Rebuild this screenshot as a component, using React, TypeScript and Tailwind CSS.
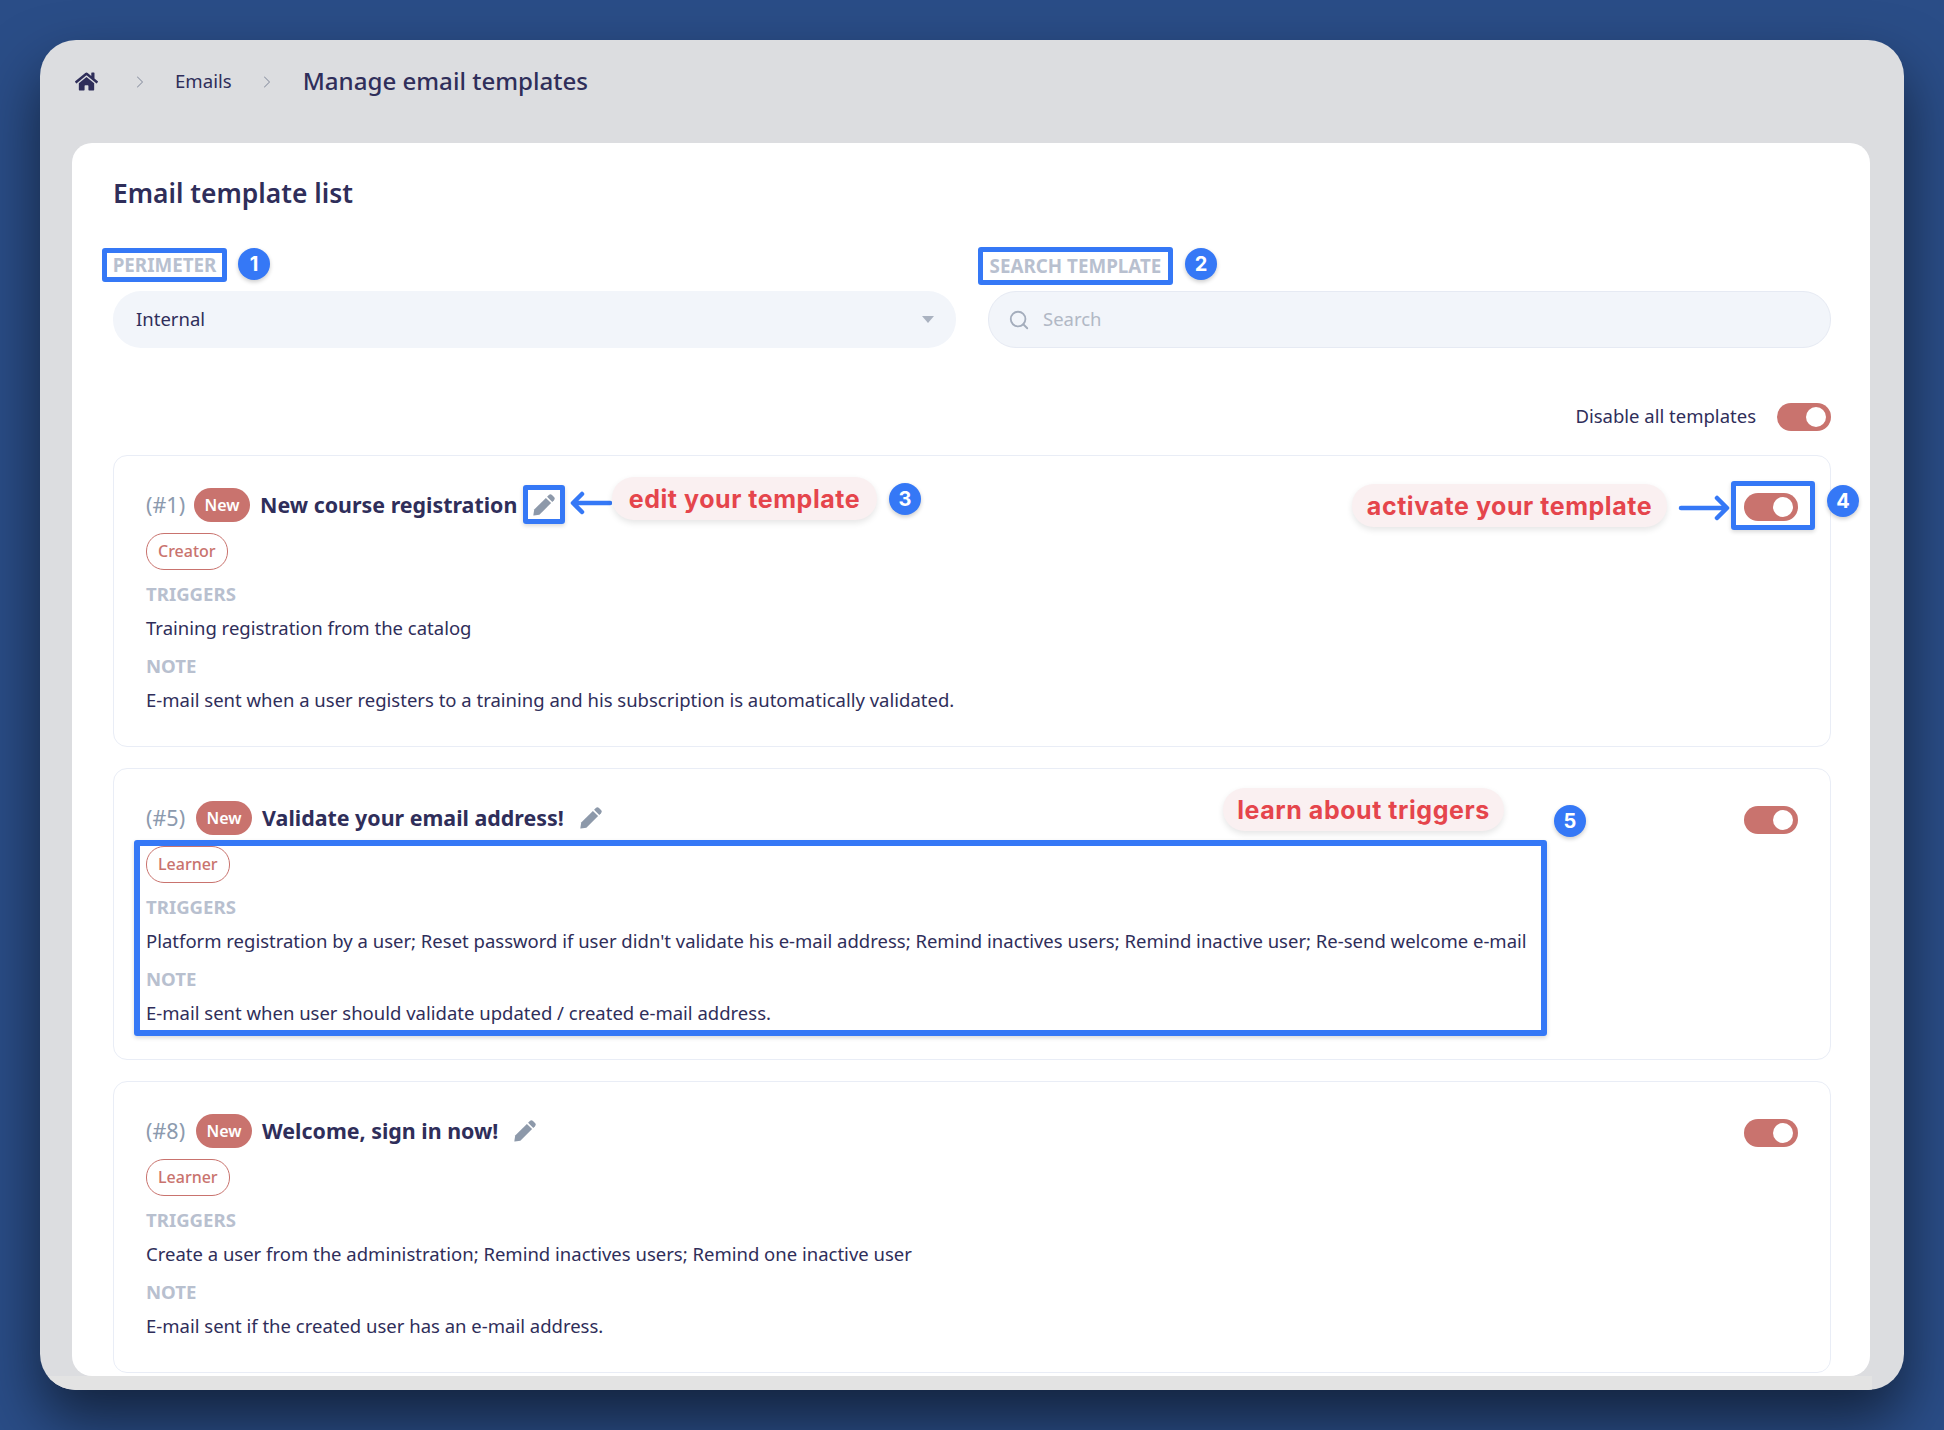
import { FaHome } from "react-icons/fa";
import { ChevronRight, Search } from "lucide-react";

const Pencil = ({ className }: { className: string }) => (
  <svg className={className} width="22" height="22" viewBox="0 0 22 22" fill="#8d99aa">
    <path d="M1.2 15.6 12.9 3.9l5.2 5.2L6.4 20.8 0.8 21.6a.4.4 0 0 1-.45-.45z" />
    <path d="M14.1 2.7 15.8 1a2.3 2.3 0 0 1 3.2 0l2 2a2.3 2.3 0 0 1 0 3.2l-1.7 1.7z" />
  </svg>
);

const Toggle = () => (
  <div className="flex h-[28px] w-[54px] items-center justify-end rounded-full bg-[#c9736e] pr-[5px]">
    <div className="h-[20px] w-[20px] rounded-full bg-white" />
  </div>
);

type CardProps = {
  num: string;
  title: string;
  role: string;
  triggers: string;
  note: string;
  numGap: string;
};

const Card = ({ num, title, role, triggers, note, numGap }: CardProps) => (
  <div className="flex h-[292px] justify-between rounded-[14px] border border-[#e9edf6] px-[32px] pt-[32px]">
    <div className="flex flex-col items-start">
      <div className="flex h-[34px] items-center">
        <span className="whitespace-nowrap text-[21.5px] text-[#8c9aae]">{num}</span>
        <span className={`${numGap} flex h-[34px] w-[56px] items-center justify-center rounded-[17px] bg-[#c9736e] text-[16px] font-semibold text-white`}>
          New
        </span>
        <span className="ml-[10px] whitespace-nowrap text-[21.4px] font-bold text-[#2f2e5a]">{title}</span>
        <Pencil className="ml-[16px]" />
      </div>
      <span className="mt-[11px] flex h-[37px] items-center rounded-[18px] border border-[#c9736e] px-[11px] pb-[2px] text-[16px] font-medium text-[#c9736e]">
        {role}
      </span>
      <div className="mt-[12px] text-[18.6px] leading-[24px] font-bold text-[#b8c0cf]">TRIGGERS</div>
      <div className="mt-[10px] whitespace-nowrap text-[18.5px] leading-[24px] text-[#2f2e5a]">{triggers}</div>
      <div className="mt-[14px] text-[18.6px] leading-[24px] font-bold text-[#b8c0cf]">NOTE</div>
      <div className="mt-[10px] whitespace-nowrap text-[18.5px] leading-[24px] text-[#2f2e5a]">{note}</div>
    </div>
    <div className="pt-[5px]">
      <Toggle />
    </div>
  </div>
);

const Num = ({ n, className }: { n: string; className: string }) => (
  <div
    className={`absolute flex h-[32px] w-[32px] items-center justify-center rounded-full bg-[#3578f6] text-[20px] font-bold text-white shadow-[0_2px_4px_rgba(0,0,0,0.2)] ${className}`}
    style={{ fontFamily: "Inter, sans-serif" }}
  >
    {n}
  </div>
);

const Callout = ({ text, className }: { text: string; className: string }) => (
  <div
    className={`absolute flex h-[43px] items-center justify-center rounded-[22px] bg-[#faf0f1] pt-[3px] text-[25px] font-bold tracking-[0.55px] whitespace-nowrap text-[#e5454c] shadow-[0_3px_6px_rgba(0,0,0,0.1)] ${className}`}
    style={{ fontFamily: "Inter, sans-serif" }}
  >
    {text}
  </div>
);

const Frame = ({ className }: { className: string }) => (
  <div className={`absolute rounded-[3px] border-[5px] border-[#3578f6] shadow-[0_2px_4px_rgba(0,0,0,0.15)] ${className}`} />
);

export default function App() {
  return (
    <div
      className="relative h-[1430px] w-[1944px] overflow-hidden bg-[#2a4d87] p-[40px] text-[#2f2e5a]"
      style={{ fontFamily: "'Noto Sans', sans-serif" }}
    >
      <div className="relative flex h-[1350px] w-[1864px] flex-col overflow-hidden rounded-[36px] bg-[#dcdde0] shadow-[0_30px_60px_rgba(0,0,0,0.55)]">
        <div className="absolute bottom-0 left-0 h-[14px] w-[1832px] bg-[#e3e3e3]" />
        <div className="flex h-[103px] flex-none items-center pb-[21px] pl-[35px]">
          <FaHome className="text-[23px] text-[#2f2e5a]" />
          <ChevronRight className="ml-[32px] mt-[2px] text-[#8f95a5]" size={20} strokeWidth={1.25} />
          <span className="ml-[25px] text-[18.6px]">Emails</span>
          <ChevronRight className="ml-[25px] mt-[2px] text-[#8f95a5]" size={20} strokeWidth={1.25} />
          <span className="ml-[26px] text-[24.1px] font-medium">Manage email templates</span>
        </div>
        <div className="relative ml-[32px] h-[1233px] w-[1798px] flex-none rounded-[20px] bg-white pt-[30px] pr-[39px] pl-[41px]">
          <h1 className="text-[26.4px] leading-[40px] font-semibold">Email template list</h1>
          <div className="mt-[78px] grid h-[57px] grid-cols-2 gap-[32px]">
            <div className="flex items-center justify-between rounded-[28px] bg-[#f2f5fa] pr-[22px] pl-[23px]">
              <span className="-mt-[2px] text-[18.5px]">Internal</span>
              <div className="h-0 w-0 border-x-[6px] border-t-[7px] border-x-transparent border-t-[#aab2c0]" />
            </div>
            <div className="flex items-center rounded-[28px] border border-[#e6eaf3] bg-[#f2f5fa] pl-[19px]">
              <Search className="text-[#a4adbc]" size={22} strokeWidth={2} />
              <span className="-mt-[2px] ml-[13px] text-[18.5px] text-[#b1b8c5]">Search</span>
            </div>
          </div>
          <div className="mt-[55px] flex h-[28px] items-center justify-end">
            <span className="-mt-[3px] text-[18.5px]">Disable all templates</span>
            <div className="ml-[21px]">
              <Toggle />
            </div>
          </div>
          <div className="mt-[24px] flex flex-col gap-[21px]">
            <Card
              num="(#1)"
              title="New course registration"
              role="Creator"
              triggers="Training registration from the catalog"
              note="E-mail sent when a user registers to a training and his subscription is automatically validated."
              numGap="ml-[9px]"
            />
            <Card
              num="(#5)"
              title="Validate your email address!"
              role="Learner"
              triggers="Platform registration by a user; Reset password if user didn't validate his e-mail address; Remind inactives users; Remind inactive user; Re-send welcome e-mail"
              note="E-mail sent when user should validate updated / created e-mail address."
              numGap="ml-[11px]"
            />
            <Card
              num="(#8)"
              title="Welcome, sign in now!"
              role="Learner"
              triggers="Create a user from the administration; Remind inactives users; Remind one inactive user"
              note="E-mail sent if the created user has an e-mail address."
              numGap="ml-[11px]"
            />
          </div>
        </div>
      </div>

      {/* annotations laid over the screenshot */}
      <div className="absolute top-[248px] left-[102px] flex h-[34px] w-[125px] items-center justify-center rounded-[3px] border-[5px] border-[#3578f6] bg-white pt-[1px] text-[18.8px] font-bold text-[#b8c0cf]">
        PERIMETER
      </div>
      <Num n="1" className="top-[248px] left-[238px]" />
      <div className="absolute top-[247px] left-[978px] flex h-[38px] w-[195px] items-center justify-center rounded-[3px] border-[5px] border-[#3578f6] bg-white text-[18.8px] font-bold whitespace-nowrap text-[#b8c0cf]">
        SEARCH TEMPLATE
      </div>
      <Num n="2" className="top-[248px] left-[1185px]" />

      <Frame className="top-[485px] left-[523px] h-[39px] w-[42px]" />
      <svg className="absolute top-[490px] left-[570px]" width="42" height="28" viewBox="0 0 42 28" fill="none" stroke="#3578f6" strokeWidth="4.5" strokeLinecap="round" strokeLinejoin="round">
        <path d="M40 13H4M12 4l-9 9 9 9" />
      </svg>
      <Callout text="edit your template" className="top-[477px] left-[612px] w-[265px]" />
      <Num n="3" className="top-[483px] left-[889px]" />

      <Callout text="activate your template" className="top-[484px] left-[1352px] w-[315px]" />
      <svg className="absolute top-[494px] left-[1678px]" width="52" height="28" viewBox="0 0 52 28" fill="none" stroke="#3578f6" strokeWidth="4.5" strokeLinecap="round" strokeLinejoin="round">
        <path d="M3 14h45M39 4l10 10-10 10" />
      </svg>
      <Frame className="top-[481px] left-[1731px] h-[49px] w-[84px]" />
      <Num n="4" className="top-[485px] left-[1827px]" />

      <Callout text="learn about triggers" className="top-[788px] left-[1223px] w-[281px]" />
      <Num n="5" className="top-[805px] left-[1554px]" />
      <div className="absolute top-[840px] left-[134px] h-[196px] w-[1413px] rounded-[3px] border-[6px] border-[#3578f6] shadow-[0_2px_4px_rgba(0,0,0,0.15)]" />
    </div>
  );
}
